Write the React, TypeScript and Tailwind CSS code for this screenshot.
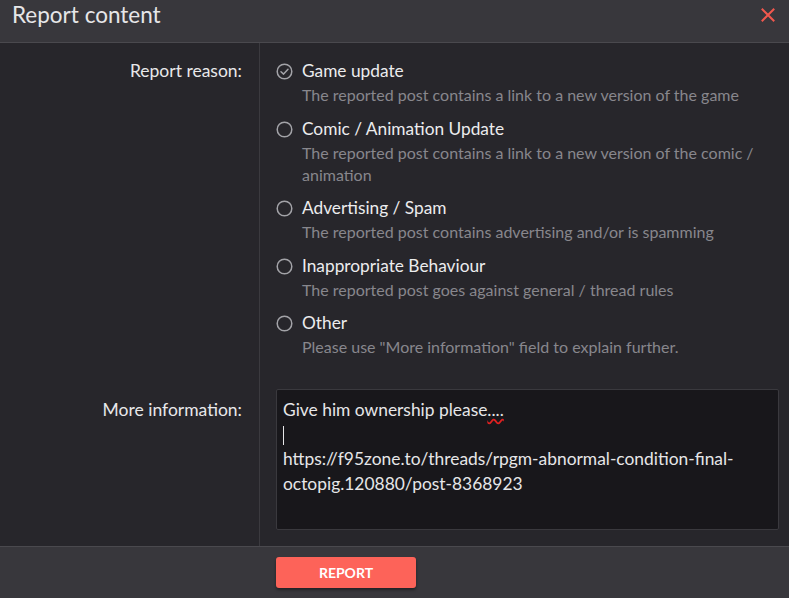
import React, { useState } from 'react';

const reasons = [
    { id: 'game', title: 'Game update', desc: 'The reported post contains a link to a new version of the game' },
    { id: 'comic', title: 'Comic / Animation Update', desc: 'The reported post contains a link to a new version of the comic / animation' },
    { id: 'spam', title: 'Advertising / Spam', desc: 'The reported post contains advertising and/or is spamming' },
    { id: 'behaviour', title: 'Inappropriate Behaviour', desc: 'The reported post goes against general / thread rules' },
    { id: 'other', title: 'Other', desc: 'Please use "More information" field to explain further.' },
];

const RadioMark: React.FC<{ checked: boolean }> = ({ checked }) => (
    <svg width="17" height="17" viewBox="0 0 17 17" className="shrink-0 mt-[4px]">
        <circle cx="8.5" cy="8.5" r="7.3" fill="none" stroke="#a3a3a8" strokeWidth="1.5" />
        {checked && (
            <path d="M5 8.7 L7.6 11.1 L12 6.3" fill="none" stroke="#a3a3a8" strokeWidth="1.5" strokeLinecap="round" strokeLinejoin="round" />
        )}
    </svg>
);

export default function App() {
    const [reason, setReason] = useState('game');

    return (
        <div className="w-[789px] h-[598px] flex flex-col bg-[#27262b] text-[#e8e8ea] overflow-hidden" style={{ fontFamily: 'Lato, "Open Sans", sans-serif' }}>
            {/* Header */}
            <div className="h-[43px] shrink-0 flex items-center justify-between pl-[12px] pr-[14px] bg-[#38373c] border-b border-[#4a494e]">
                <h2 className="text-[22.5px] leading-none text-[#e6e6e8] -mt-[12px]">Report content</h2>
                <button className="-mt-[12px] text-[#f0584e]">
                    <svg width="14" height="14" viewBox="0 0 14 14">
                        <path d="M1.5 1.5 L12.5 12.5 M12.5 1.5 L1.5 12.5" stroke="currentColor" strokeWidth="2" strokeLinecap="square" />
                    </svg>
                </button>
            </div>

            {/* Body */}
            <div className="flex-1 flex min-h-0">
                <div className="w-[260px] shrink-0 border-r border-[#3b3a3f] pr-[17px] flex flex-col items-end text-[17.5px] leading-[24px]">
                    <div className="pt-[16px]">Report reason:</div>
                    <div className="mt-[315px]">More information:</div>
                </div>

                <div className="flex-1 pl-[16px] pr-[10px] pt-[16px] pb-[16px] flex flex-col">
                    <div className="flex flex-col gap-[10.5px]">
                        {reasons.map((r) => (
                            <label key={r.id} className="flex gap-[9px] cursor-pointer" onClick={() => setReason(r.id)}>
                                <RadioMark checked={reason === r.id} />
                                <div className="flex flex-col">
                                    <span className="text-[17.3px] leading-[24px] text-[#ececee]">{r.title}</span>
                                    <span className="mt-[1px] text-[16px] leading-[22px] text-[#88878d] pr-[20px]">{r.desc}</span>
                                </div>
                            </label>
                        ))}
                    </div>

                    <div className="mt-[31px] h-[141px] bg-[#18171b] border border-[#3a393e] rounded-[2px] px-[6px] pt-[8px] text-[17.4px] leading-[24.7px] text-[#e6e6e8]">
                        <div>Give him ownership please<span className="underline decoration-wavy decoration-[#e02020] underline-offset-2">....</span></div>
                        <div className="h-[24.7px] flex items-center"><span className="w-px h-[19px] bg-[#e6e6e8]" /></div>
                        <div>https://f95zone.to/threads/rpgm-abnormal-condition-final-octopig.120880/post-8368923</div>
                    </div>
                </div>
            </div>

            {/* Footer */}
            <div className="h-[52px] shrink-0 bg-[#38373c] border-t border-[#4a494e] pl-[276px] pt-[10px]">
                <button className="w-[140px] h-[31px] rounded-[3px] bg-[#fd6359] text-white text-[14px] font-bold shadow-[0_2px_3px_rgba(0,0,0,0.4)]">
                    REPORT
                </button>
            </div>
        </div>
    );
}
